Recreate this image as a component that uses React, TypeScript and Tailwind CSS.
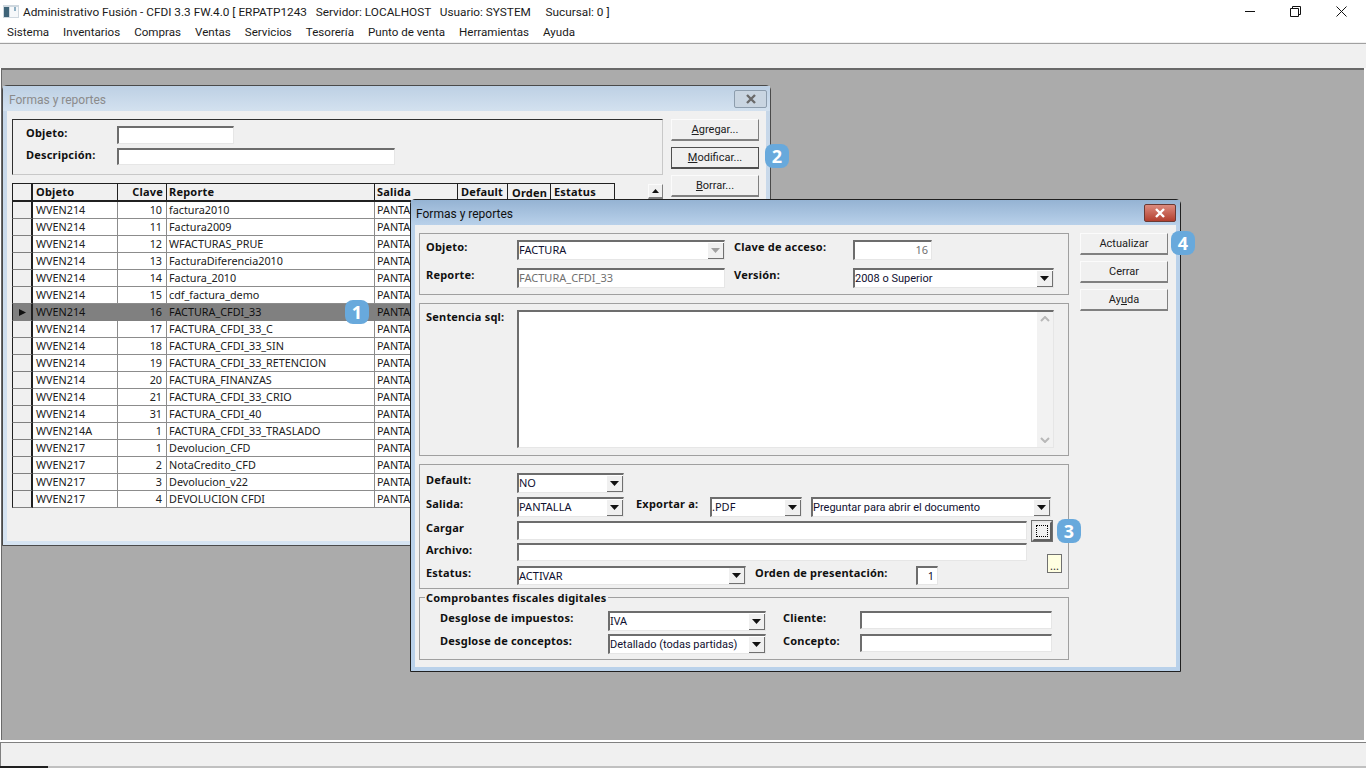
import React from 'react'

const sunken = 'border-t-2 border-l-2 border-r border-b border-t-[#6d6d6d] border-l-[#6d6d6d] border-r-[#e6e6e6] border-b-[#e6e6e6] bg-white'
const raised = 'border border-t-[#fbfbfb] border-l-[#fbfbfb] border-r-[#808080] border-b-[#808080] border-b-2 bg-[#f0f0f0]'
const roboto = "font-['Roboto',sans-serif] mt-[1px]"

const MENUS = ['Sistema', 'Inventarios', 'Compras', 'Ventas', 'Servicios', 'Tesorería', 'Punto de venta', 'Herramientas', 'Ayuda']

const ROWS: [string, number, string][] = [
  ['WVEN214', 10, 'factura2010'],
  ['WVEN214', 11, 'Factura2009'],
  ['WVEN214', 12, 'WFACTURAS_PRUE'],
  ['WVEN214', 13, 'FacturaDiferencia2010'],
  ['WVEN214', 14, 'Factura_2010'],
  ['WVEN214', 15, 'cdf_factura_demo'],
  ['WVEN214', 16, 'FACTURA_CFDI_33'],
  ['WVEN214', 17, 'FACTURA_CFDI_33_C'],
  ['WVEN214', 18, 'FACTURA_CFDI_33_SIN'],
  ['WVEN214', 19, 'FACTURA_CFDI_33_RETENCION'],
  ['WVEN214', 20, 'FACTURA_FINANZAS'],
  ['WVEN214', 21, 'FACTURA_CFDI_33_CRIO'],
  ['WVEN214', 31, 'FACTURA_CFDI_40'],
  ['WVEN214A', 1, 'FACTURA_CFDI_33_TRASLADO'],
  ['WVEN217', 1, 'Devolucion_CFD'],
  ['WVEN217', 2, 'NotaCredito_CFD'],
  ['WVEN217', 3, 'Devolucion_v22'],
  ['WVEN217', 4, 'DEVOLUCION CFDI'],
]

function Label({ children, className = '' }: { children: React.ReactNode; className?: string }) {
  return <div className={`shrink-0 font-bold tracking-[0.2px] leading-[13px] text-[#101010] whitespace-nowrap ${className}`}>{children}</div>
}

function Input({ className = '', value = '' }: { className?: string; value?: string }) {
  return <div className={`${sunken} shrink-0 flex items-center overflow-hidden whitespace-nowrap ${className}`}>{value}</div>
}

function Combo({ className = '', value, disabled, textClass = '' }: { className?: string; value: string; disabled?: boolean; textClass?: string }) {
  return (
    <div className={`${sunken} shrink-0 flex items-center justify-between h-[20px] text-[#101030] whitespace-nowrap ${className}`}>
      <span className={textClass}>{value}</span>
      <span className="flex items-center justify-center w-[16px] h-[16px] bg-[#f0f0f0] border-r border-b border-[#707070]">
        <svg width="9" height="5" viewBox="0 0 9 5"><path d="M0 0h9L4.5 5z" fill={disabled ? '#a0a0a0' : '#111'} /></svg>
      </span>
    </div>
  )
}

function Btn({ children, className = '' }: { children: React.ReactNode; className?: string }) {
  return (
    <div className={`${raised} font-['Roboto',sans-serif] flex items-center justify-center w-[88px] h-[22px] pt-[1px] text-[#202020] ${className}`}>{children}</div>
  )
}

function Badge({ n, className }: { n: number; className: string }) {
  return (
    <div className={`absolute z-20 flex items-center justify-center w-[24px] h-[24px] rounded-[8px] bg-[#68a9dc] text-white text-[18px] font-bold leading-none ${className}`}>
      {n}
    </div>
  )
}

function Row({ objeto, clave, reporte, selected }: { objeto: string; clave: number; reporte: string; selected: boolean }) {
  const line = selected ? 'border-[#808080]' : 'border-[#8c8c8c]'
  return (
    <div className={`flex h-[17px] leading-[16px] text-[10.8px] ${selected ? 'bg-[#808080] text-[#101010]' : 'bg-white text-[#202020]'}`}>
      <div className={`w-[21px] shrink-0 flex items-center justify-center border-l border-r-2 border-b border-l-[#202020] border-r-[#202020] border-b-[#808080] ${selected ? 'bg-[#808080]' : 'bg-[#f0f0f0]'}`}>
        {selected && <svg width="7" height="7" viewBox="0 0 7 7"><path d="M0 0l7 3.5L0 7z" fill="#111" /></svg>}
      </div>
      <div className={`w-[85px] shrink-0 pl-[3px] border-r border-b ${line}`}>{objeto}</div>
      <div className={`w-[49px] shrink-0 pr-[4px] text-right border-r border-b ${line}`}>{clave}</div>
      <div className={`w-[208px] shrink-0 pl-[2px] border-r border-b ${line}`}>{reporte}</div>
      <div className={`w-[240px] shrink-0 pl-[2px] border-b ${line}`}>PANTALLA</div>
    </div>
  )
}

function FormasWindow() {
  return (
    <div className="absolute left-0 top-[15px] w-[769px] h-[461px] flex flex-col rounded-t-[5px] border border-[#4a4a4a] bg-gradient-to-b from-[#c5d6e8] to-[#d6e4f2]">
      <div className="h-[25px] shrink-0 flex items-center justify-between pl-[6px] pr-[3px] text-[12px] text-[#8b8b8b] bg-gradient-to-b from-[#bdd0e4] to-[#d3e1ef]">
        <span className="font-['Roboto',sans-serif] mt-[3px]">Formas y reportes</span>
        <span className="flex items-center justify-center w-[33px] h-[18px] mt-[1px] border border-[#8d9dad] rounded-[2px] bg-[#c9d5e1]">
          <svg width="12" height="10" viewBox="0 0 12 10"><path d="M2 1l8 8M10 1L2 9" stroke="#6a6a6a" strokeWidth="2.4" /></svg>
        </span>
      </div>
      <div className="flex-1 mx-[4px] mb-[4px] flex gap-[8px] pt-[8px] pl-[5px] bg-[#f0f0f0]">
        <div className="w-[651px] shrink-0 flex flex-col gap-[8px]">
          <div className="h-[56px] flex flex-col gap-[4px] pt-[6px] pl-[13px] border border-t-[#303030] border-l-[#303030] border-r-[#c8c8c8] border-b-[#c8c8c8]">
            <div className="flex items-start">
              <Label className="w-[91px]">Objeto:</Label>
              <Input className="w-[117px] h-[18px]" />
            </div>
            <div className="flex items-start">
              <Label className="w-[91px]">Descripción:</Label>
              <Input className="w-[278px] h-[17px]" />
            </div>
          </div>
          <div className="flex flex-col">
            <div className="flex h-[19px] leading-[16px] font-bold tracking-[0.2px] text-[#101010]">
              <div className="w-[21px] border border-r-2 border-[#202020] border-b-2 bg-[#f0f0f0]" />
              <div className="w-[85px] pl-[3px] border-t border-r border-b-2 border-[#202020]">Objeto</div>
              <div className="w-[49px] pr-[3px] text-right border-t border-r border-b-2 border-[#202020]">Clave</div>
              <div className="w-[208px] pl-[2px] border-t border-r border-b-2 border-[#202020]">Reporte</div>
              <div className="w-[83px] pl-[2px] border-t border-r border-b-2 border-[#202020]">Salida</div>
              <div className="w-[50px] pl-[3px] border-t border-r border-b-2 border-[#202020]">Default</div>
              <div className="w-[43px] pl-[4px] pt-[1px] border-t border-r border-b-2 border-[#202020]">Orden</div>
              <div className="w-[64px] pl-[3px] border-t border-r border-b-2 border-[#202020]">Estatus</div>
              <div className={`${raised} ml-auto mt-[1px] w-[15px] h-[15px] flex items-center justify-center`}>
                <svg width="7" height="4" viewBox="0 0 7 4"><path d="M0 4h7L3.5 0z" fill="#111" /></svg>
              </div>
            </div>
            {ROWS.map((r, i) => (
              <Row key={i} objeto={r[0]} clave={r[1]} reporte={r[2]} selected={i === 6} />
            ))}
          </div>
        </div>
        <div className="flex flex-col gap-[6px]">
          <Btn><span><u>A</u>gregar...</span></Btn>
          <Btn className="!border-[#505050]"><span><u>M</u>odificar...</span></Btn>
          <Btn><span><u>B</u>orrar...</span></Btn>
        </div>
      </div>
    </div>
  )
}

function ReportDialog() {
  const group = 'w-[650px] border border-[#a0a0a0]'
  return (
    <div className="absolute z-10 left-[408px] top-[129px] w-[771px] h-[473px] flex flex-col rounded-t-[5px] border border-[#202020] bg-[#b9d1ea]">
      <div className="h-[25px] shrink-0 flex items-center justify-between pl-[5px] pr-[4px] text-[12px] text-[#101010] bg-gradient-to-b from-[#95b3d3] to-[#b9d1ea]">
        <span className="font-['Roboto',sans-serif] mt-[2px]">Formas y reportes</span>
        <span className="flex items-center justify-center w-[32px] h-[18px] border border-[#6b3a34] rounded-[2px] bg-gradient-to-b from-[#dc8a7e] to-[#b23e2e]">
          <svg width="12" height="10" viewBox="0 0 12 10"><path d="M2 1l8 8M10 1L2 9" stroke="#fff" strokeWidth="2.4" /></svg>
        </span>
      </div>
      <div className="flex-1 mx-[4px] mb-[4px] flex gap-[11px] pt-[8px] pl-[4px] bg-[#f0f0f0]">
        <div className="flex flex-col gap-[8px]">
          <div className={`${group} h-[62px] flex flex-col gap-[8px] pt-[6px] pl-[6px]`}>
            <div className="flex items-start">
              <Label className="w-[91px]">Objeto:</Label>
              <Combo className="w-[208px]" value="FACTURA" disabled />
              <Label className="w-[119px] ml-[9px]">Clave de acceso:</Label>
              <Input className="w-[79px] h-[20px] justify-end pr-[3px] text-[#707070]" value="16" />
            </div>
            <div className="flex items-start">
              <Label className="w-[91px]">Reporte:</Label>
              <Input className="w-[208px] h-[20px] text-[#707070]" value="FACTURA_CFDI_33" />
              <Label className="w-[119px] ml-[9px]">Versión:</Label>
              <Combo className="w-[201px]" textClass={roboto} value="2008 o Superior" />
            </div>
          </div>
          <div className={`${group} h-[153px] flex items-start pt-[6px] pl-[6px]`}>
            <Label className="w-[91px]">Sentencia sql:</Label>
            <div className={`${sunken} w-[537px] h-[138px] flex justify-end`}>
              <div className="w-[16px] h-full flex flex-col items-center justify-between py-[4px] bg-[#f2f2f2]">
                <svg width="10" height="6" viewBox="0 0 10 6"><path d="M1 5l4-4 4 4" fill="none" stroke="#b8b8b8" strokeWidth="2" /></svg>
                <svg width="10" height="6" viewBox="0 0 10 6"><path d="M1 1l4 4 4-4" fill="none" stroke="#b8b8b8" strokeWidth="2" /></svg>
              </div>
            </div>
          </div>
          <div className={`${group} relative h-[125px] flex flex-col pt-[8px] pl-[6px]`}>
            <div className="flex items-start">
              <Label className="w-[91px]">Default:</Label>
              <Combo className="w-[107px]" value="NO" />
            </div>
            <div className="flex items-start mt-[4px]">
              <Label className="w-[91px]">Salida:</Label>
              <Combo className="w-[107px]" value="PANTALLA" />
              <Label className="w-[74px] ml-[12px]">Exportar a:</Label>
              <Combo className="w-[92px]" value=".PDF" />
              <Combo className="w-[240px] ml-[9px]" textClass={roboto} value="Preguntar para abrir el documento" />
            </div>
            <div className="flex items-start mt-[4px]">
              <Label className="w-[91px]">Cargar</Label>
              <Input className="w-[510px] h-[19px]" />
              <div className="ml-[5px] w-[20px] h-[20px] flex items-center justify-center border-2 border-t-[#e8e8e8] border-l-[#e8e8e8] border-r-[#606060] border-b-[#606060] outline outline-1 outline-[#707070] bg-[#f0f0f0]">
                <div className="w-[12px] h-[12px] border border-dotted border-black" />
              </div>
            </div>
            <div className="flex items-start mt-[2px]">
              <Label className="w-[91px]">Archivo:</Label>
              <Input className="w-[510px] h-[18px]" />
            </div>
            <div className="flex items-start mt-[5px]">
              <Label className="w-[91px]">Estatus:</Label>
              <Combo className="w-[229px] !h-[19px]" value="ACTIVAR" />
              <Label className="w-[161px] ml-[9px]">Orden de presentación:</Label>
              <Input className="w-[22px] h-[19px] justify-end pr-[3px] text-[#101030]" value="1" />
            </div>
            <div className="absolute left-[627px] top-[89px] w-[15px] h-[19px] flex items-end justify-center border border-[#707070] bg-[#ffffe1] leading-[13px] text-[#303030]">...</div>
          </div>
          <div className={`${group} relative h-[63px] flex flex-col gap-[3px] pt-[13px] pl-[20px]`}>
            <div className="absolute left-[5px] -top-[7px] bg-[#f0f0f0] px-[1px] font-bold tracking-[0.2px] leading-[13px] text-[#101010]">Comprobantes fiscales digitales</div>
            <div className="flex items-start">
              <Label className="w-[168px]">Desglose de impuestos:</Label>
              <Combo className="w-[158px]" value="IVA" />
              <Label className="w-[77px] ml-[17px]">Cliente:</Label>
              <Input className="w-[192px] h-[18px]" />
            </div>
            <div className="flex items-start">
              <Label className="w-[168px]">Desglose de conceptos:</Label>
              <Combo className="w-[158px]" textClass={roboto} value="Detallado (todas partidas)" />
              <Label className="w-[77px] ml-[17px]">Concepto:</Label>
              <Input className="w-[192px] h-[18px]" />
            </div>
          </div>
        </div>
        <div className="flex flex-col gap-[6px]">
          <Btn>Actualizar</Btn>
          <Btn>Cerrar</Btn>
          <Btn><span>Ay<u>u</u>da</span></Btn>
        </div>
      </div>
    </div>
  )
}

export default function App() {
  return (
    <div className="w-[1366px] h-[768px] overflow-hidden flex flex-col bg-white text-[11px] text-[#202020] font-['Noto_Sans',sans-serif]">
      <div className="h-[22px] shrink-0 flex items-center text-[11.8px] text-[#1a1a1a] font-['Roboto',sans-serif]">
        <svg className="ml-[3px] mr-[4px]" width="16" height="13" viewBox="0 0 16 13">
          <rect width="16" height="13" fill="#cfd8df" />
          <rect x="1" y="2" width="5" height="10" fill="#3f6478" />
          <rect x="7" y="2" width="8" height="10" fill="#f6f8fa" />
          <rect x="11" y="2" width="2" height="4" fill="#8fb0c4" />
        </svg>
        <span className="whitespace-pre mt-[3px]">Administrativo Fusión - CFDI 3.3 FW.4.0 [ ERPATP1243   Servidor: LOCALHOST   Usuario: SYSTEM     Sucursal: 0 ]</span>
        <div className="ml-auto mr-[2px] flex items-center">
          <span className="w-[46px] flex justify-center">
            <svg width="11" height="11" viewBox="0 0 11 11"><path d="M0 5.5h10" stroke="#111" /></svg>
          </span>
          <span className="w-[45px] flex justify-center">
            <svg width="11" height="11" viewBox="0 0 11 11"><path d="M0.5 2.5h8v8h-8zM2.5 2.5v-2h8v8h-2" fill="none" stroke="#111" /></svg>
          </span>
          <span className="w-[46px] flex justify-center">
            <svg width="11" height="11" viewBox="0 0 11 11"><path d="M0.5 0.5l10 10M10.5 0.5l-10 10" stroke="#111" /></svg>
          </span>
        </div>
      </div>
      <div className="h-[21px] shrink-0 flex items-center gap-[14px] pl-[7px] pt-[2px] text-[11.6px] text-[#1a1a1a] border-b border-[#f0f0f0] font-['Roboto',sans-serif]">
        {MENUS.map((m) => <span key={m}>{m}</span>)}
      </div>
      <div className="h-[25px] shrink-0 border-t border-[#a0a0a0] bg-[#f0f0f0]" />
      <div className="relative flex-1 ml-[1px] mr-[2px] border-t-2 border-l border-[#696969] bg-[#ababab]">
        <FormasWindow />
        <ReportDialog />
        <Badge n={1} className="left-[343px] top-[230px]" />
        <Badge n={2} className="left-[763px] top-[74px]" />
        <Badge n={3} className="left-[1055px] top-[449px]" />
        <Badge n={4} className="left-[1169px] top-[161px]" />
      </div>
      <div className="h-[28px] shrink-0 flex flex-col border-t-2 border-white">
        <div className="flex-1 border-t border-l border-[#808080] bg-[#f0f0f0]" />
        <div className="h-[2px] flex bg-[#c0c0c0]">
          <div className="w-[48px] bg-[#202020]" />
        </div>
      </div>
    </div>
  )
}
